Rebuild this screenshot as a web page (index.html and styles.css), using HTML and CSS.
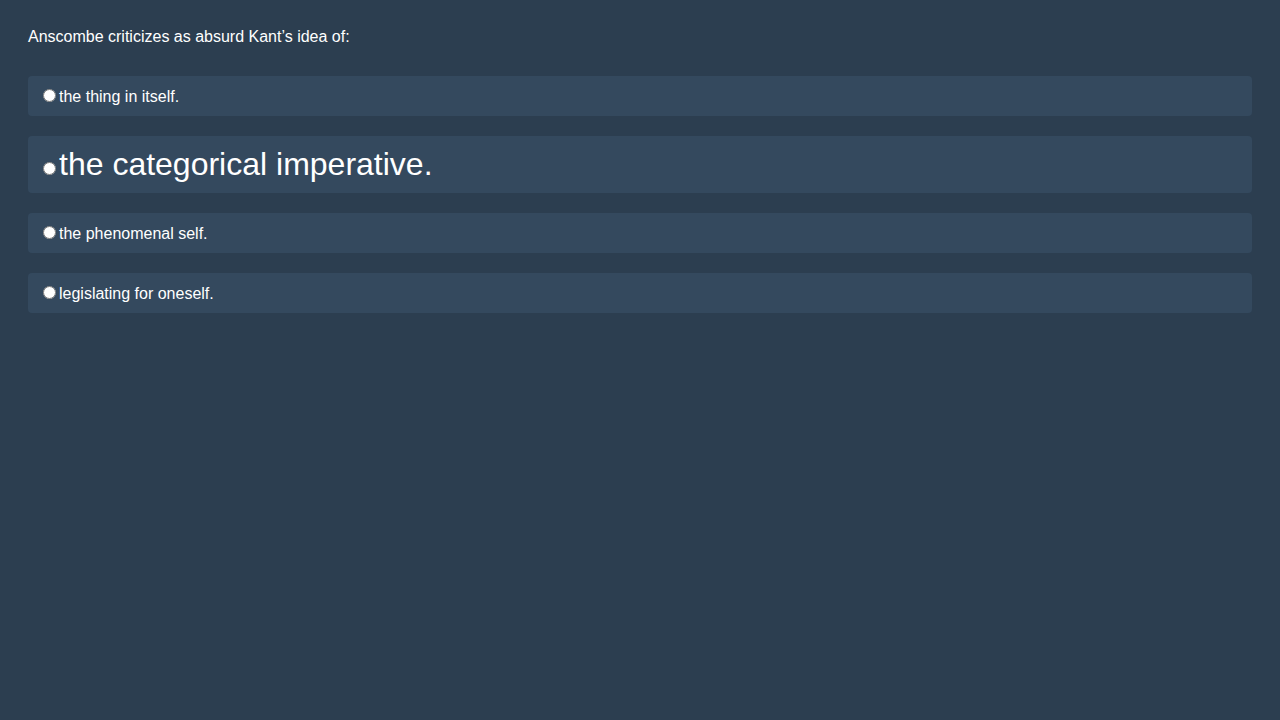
FILE: index.html
```html
<!DOCTYPE html>
<html>
<head>
<meta charset="utf-8">
<link rel="stylesheet" href="styles.css">
</head>
<body>
<div class="quiz">
  <div class="question">Anscombe criticizes as absurd Kant’s idea of:</div>
  <div class="options">
    <label class="option"><input type="radio" name="a">the thing in itself.</label>
    <label class="option big"><input type="radio" name="a">the categorical imperative.</label>
    <label class="option"><input type="radio" name="a">the phenomenal self.</label>
    <label class="option"><input type="radio" name="a">legislating for oneself.</label>
  </div>
</div>
</body>
</html>
```
FILE: styles.css
```css
html, body {
  margin: 0;
  height: 100%;
}
body {
  background: #2c3e50;
  color: #ffffff;
  font-family: "Liberation Sans", Arial, sans-serif;
  font-size: 16px;
}
.quiz {
  padding: 28px;
}
.question {
  margin-bottom: 30px;
}
.options {
  display: flex;
  flex-direction: column;
  gap: 20px;
}
.option {
  display: block;
  background: #34495e;
  border-radius: 4px;
  padding: 10px;
}
.option.big {
  font-size: 32px;
}
```
